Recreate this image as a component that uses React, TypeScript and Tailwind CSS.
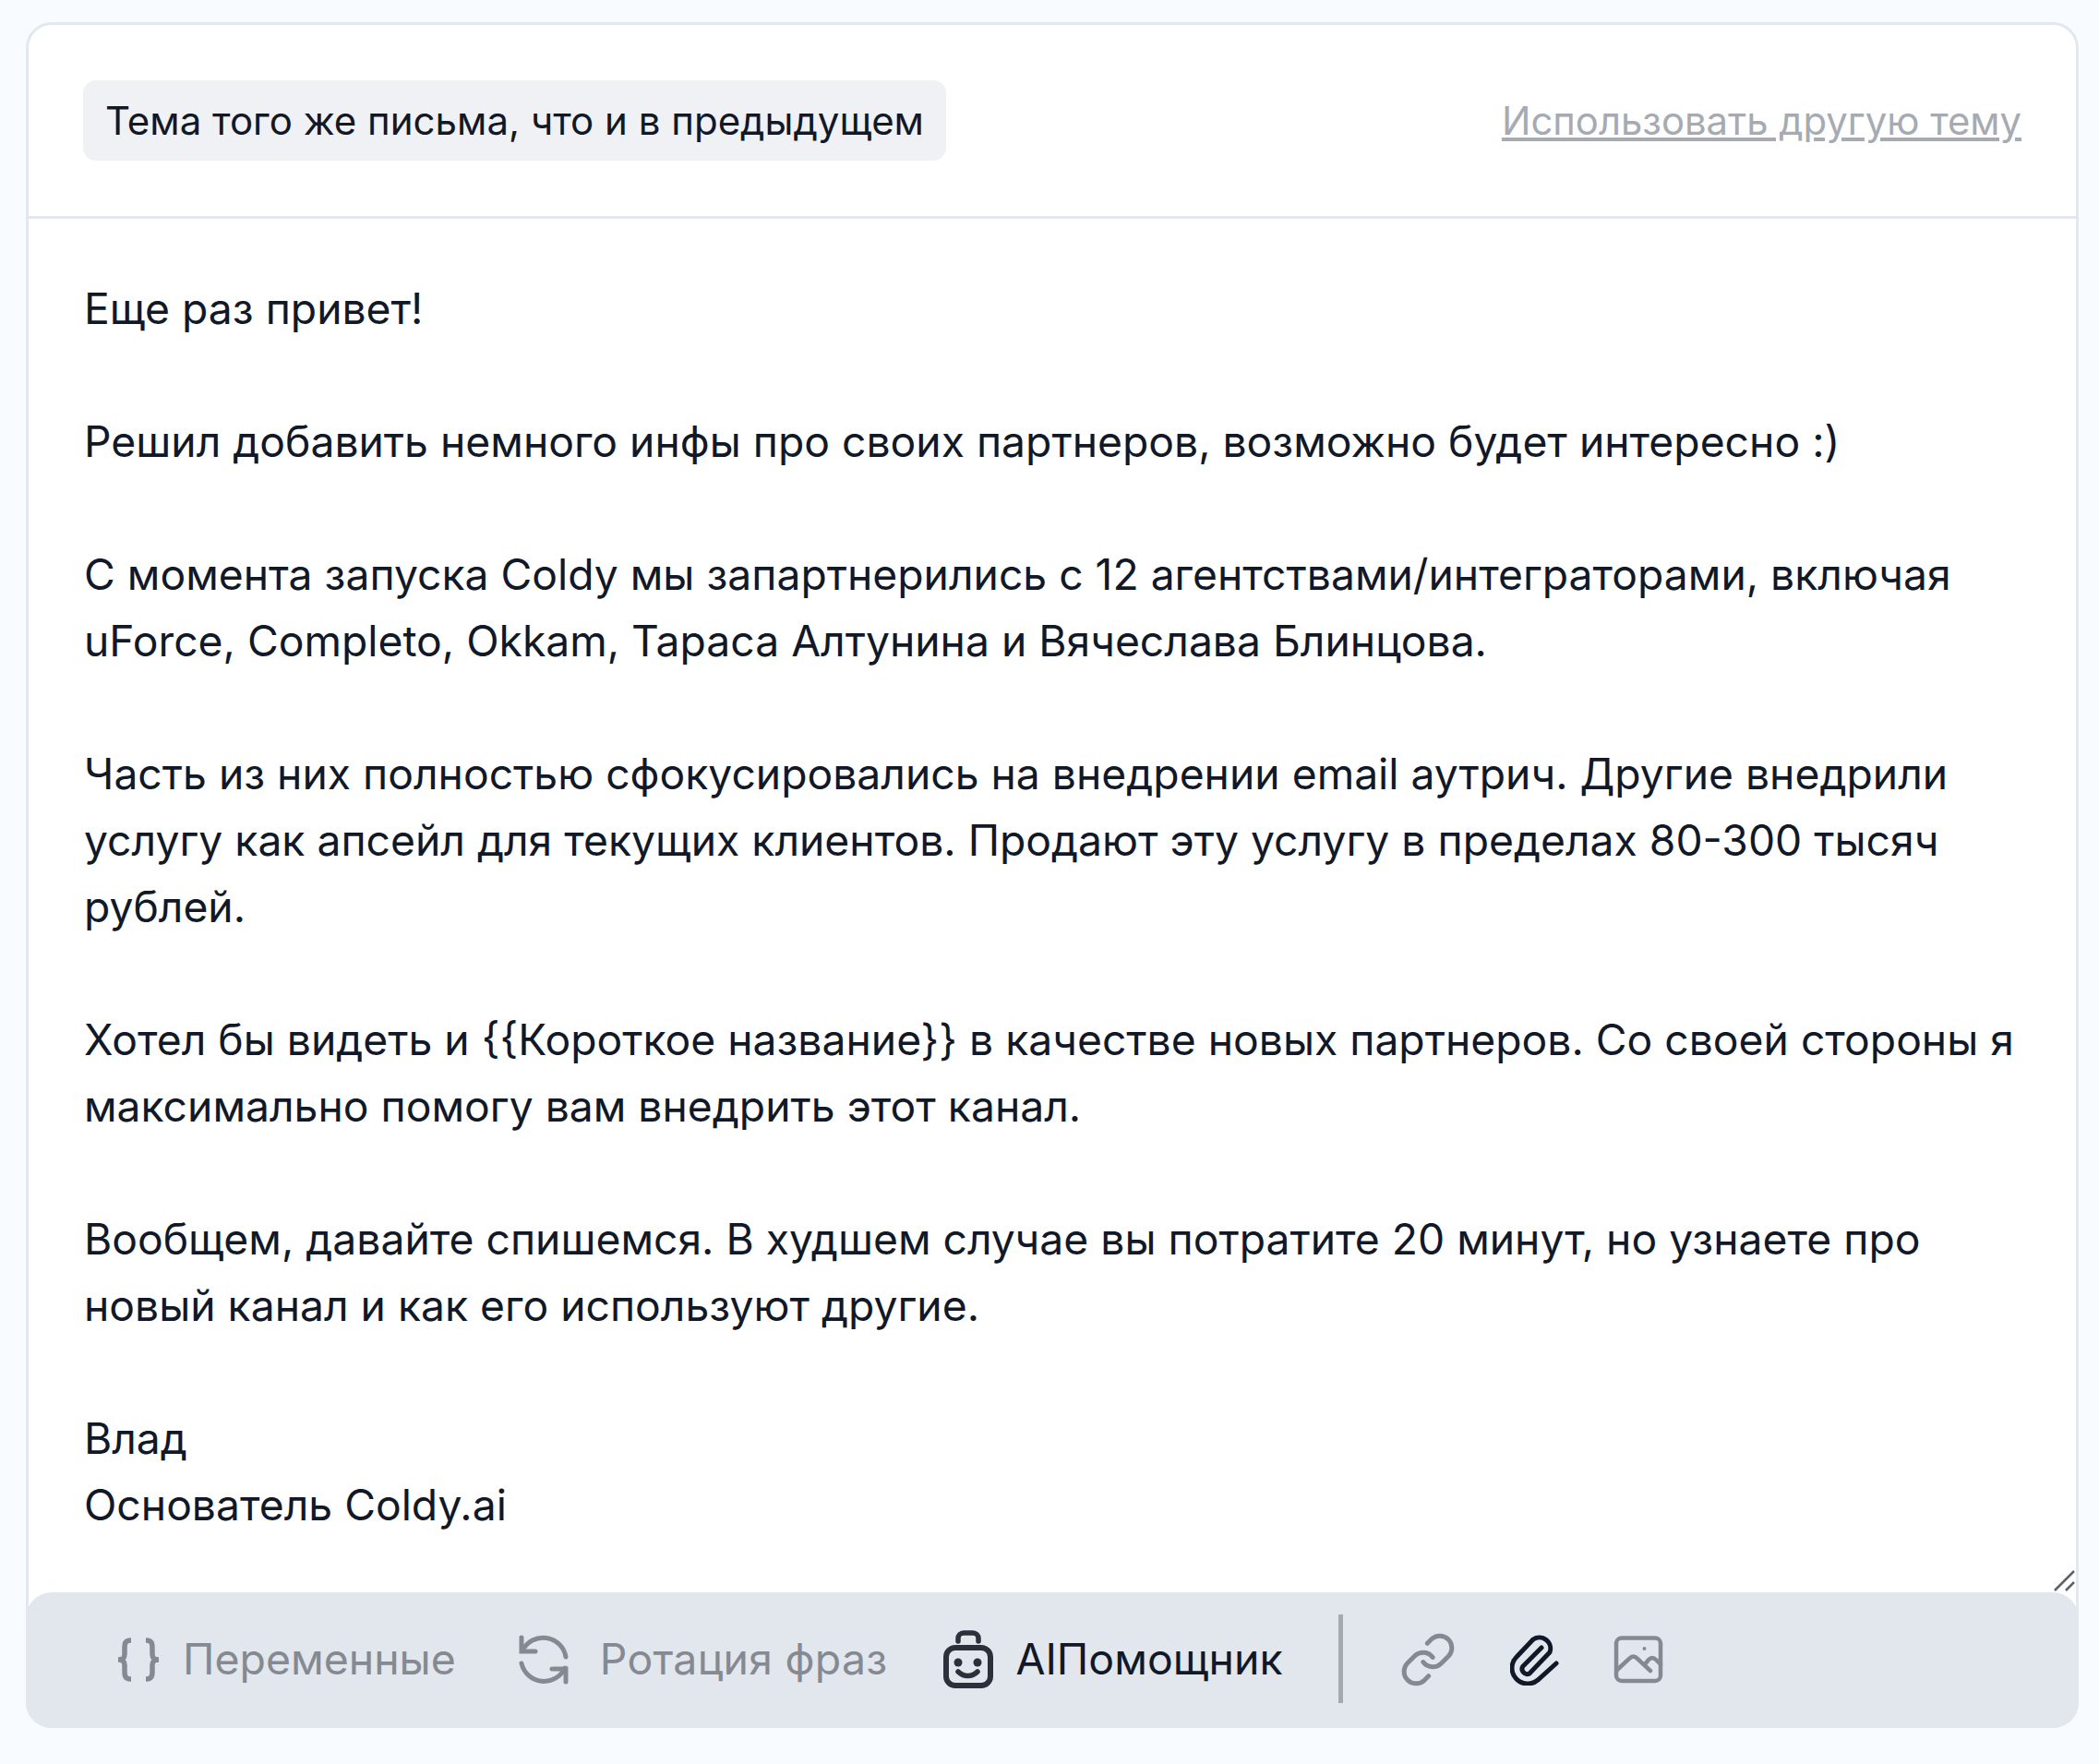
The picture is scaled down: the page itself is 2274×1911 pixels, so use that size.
function BracesIcon() {
  return (
    <svg viewBox="0 0 50 48" className="w-[50px] h-[48px]" fill="none" stroke="currentColor" strokeWidth="5.5">
      <path d="M17 3C10 3 10 7 10 12v6c0 4-2 6-7 6 5 0 7 2 7 6v6c0 5 0 9 7 9" />
      <path d="M33 3c7 0 7 4 7 9v6c0 4 2 6 7 6-5 0-7 2-7 6v6c0 5 0 9-7 9" />
    </svg>
  );
}

function RotationIcon() {
  return (
    <svg viewBox="0 0 54 54" className="w-[54px] h-[54px] overflow-visible" fill="none" stroke="currentColor" strokeWidth="5" strokeLinecap="round">
      <path d="M2 3v15h15" />
      <path d="M3 17A25 25 0 0 1 50 24" />
      <path d="M2 31A25 25 0 0 0 49 36" />
      <path d="M35 37h15v14" />
    </svg>
  );
}

function BotIcon() {
  return (
    <svg viewBox="0 0 54 63" className="w-[54px] h-[63px]" fill="none" stroke="#2b303b">
      <path d="M16 12V9a6 6 0 0 1 6-6h10a6 6 0 0 1 6 6v3" strokeWidth="5.5" strokeLinecap="round" />
      <rect x="3" y="19" width="48" height="41" rx="10" strokeWidth="6" />
      <circle cx="16" cy="35" r="4.5" fill="#2b303b" stroke="none" />
      <circle cx="37" cy="35" r="4.5" fill="#2b303b" stroke="none" />
      <path d="M16 45c6 6 15 6 21 0" strokeWidth="5.5" strokeLinecap="round" />
    </svg>
  );
}

function LinkIcon() {
  return (
    <svg viewBox="2 2 20 20" className="w-[52px] h-[52px] overflow-visible" fill="none" stroke="currentColor" strokeWidth="1.9" strokeLinecap="round">
      <path d="M10 13a5 5 0 0 0 7.54.54l3-3a5 5 0 0 0-7.07-7.07l-1.72 1.71" />
      <path d="M14 11a5 5 0 0 0-7.54-.54l-3 3a5 5 0 0 0 7.07 7.07l1.71-1.71" />
    </svg>
  );
}

function ClipIcon() {
  return (
    <svg viewBox="25 18 54 56" className="w-[54px] h-[56px]" fill="none" stroke="#111827" strokeWidth="5" strokeLinecap="round">
      <path d="M59 33 39 53A5.5 5.5 0 0 0 46 61L68 38A12 12 0 0 0 50 24L32 43A17 17 0 0 0 55 68L75 50" />
    </svg>
  );
}

function PictureIcon() {
  return (
    <svg viewBox="27 21 54 52" className="w-[54px] h-[52px]" fill="none" stroke="currentColor" strokeWidth="4.5" strokeLinecap="round">
      <rect x="30" y="23.5" width="48" height="46.5" rx="6" />
      <circle cx="60.5" cy="35" r="2" fill="currentColor" stroke="none" />
      <path d="M31 58 44 46Q48.5 41 53 46L67 59" />
      <path d="M61 52 65 47Q69 43 73 47L78 52" />
    </svg>
  );
}

const body = `Еще раз привет!

Решил добавить немного инфы про своих партнеров, возможно будет интересно :)

С момента запуска Coldy мы запартнерились с 12 агентствами/интеграторами, включая uForce, Completo, Okkam, Тараса Алтунина и Вячеслава Блинцова.

Часть из них полностью сфокусировались на внедрении email аутрич. Другие внедрили услугу как апсейл для текущих клиентов. Продают эту услугу в пределах 80-300 тысяч рублей.

Хотел бы видеть и {{Короткое название}} в качестве новых партнеров. Со своей стороны я максимально помогу вам внедрить этот канал.

Вообщем, давайте спишемся. В худшем случае вы потратите 20 минут, но узнаете про новый канал и как его используют другие.

Влад
Основатель Coldy.ai`;

export default function App() {
  return (
    <div className="min-h-screen bg-[#f8fbff] pl-[28px] pr-[22px] py-[24px] font-['Inter',sans-serif]">
      <div className="bg-white border-[3px] border-[#e2e8f0] rounded-[28px]">
        <div className="flex items-center justify-between px-[59px] py-[60px] border-b-[3px] border-[#e2e8f0]">
          <div className="h-[87px] flex items-center pl-[24px] pr-[24px] rounded-[14px] bg-[#eff1f5] text-[42px] text-[#111827]">
            Тема того же письма, что и в предыдущем
          </div>
          <a className="mt-[2px] text-[41.8px] text-[#a5aab3] underline">Использовать другую тему</a>
        </div>
        <div className="relative pl-[60px] pr-[59px] pt-[61px] pb-[62px] text-[46.25px] leading-[72px] text-[#111827] whitespace-pre-wrap">
          {body}
          <svg viewBox="0 0 24 24" className="absolute right-0 bottom-[4px] w-[24px] h-[24px]" stroke="#5b616b" strokeWidth="2.5">
            <path d="M1 23 22 2M13 23l9-9" />
          </svg>
        </div>
        <div className="-m-[3px] h-[147px] pb-[1px] rounded-[28px] bg-[#e2e6ed] flex items-center pl-[97px] text-[46.4px] text-[#858a92]">
          <div className="flex items-center gap-[23px]">
            <BracesIcon />
            <span>Переменные</span>
          </div>
          <div className="flex items-center gap-[33px] ml-[69px]">
            <RotationIcon />
            <span className="tracking-[0.25px]">Ротация фраз</span>
          </div>
          <div className="flex items-center gap-[24px] ml-[61px] text-[#111827]">
            <BotIcon />
            <span>AIПомощник</span>
          </div>
          <div className="ml-[60px] mb-[2px] w-[5px] h-[96px] bg-[#a5a9b0]" />
          <div className="ml-[66px]"><LinkIcon /></div>
          <div className="ml-[63px]"><ClipIcon /></div>
          <div className="ml-[58px]"><PictureIcon /></div>
        </div>
      </div>
    </div>
  );
}
